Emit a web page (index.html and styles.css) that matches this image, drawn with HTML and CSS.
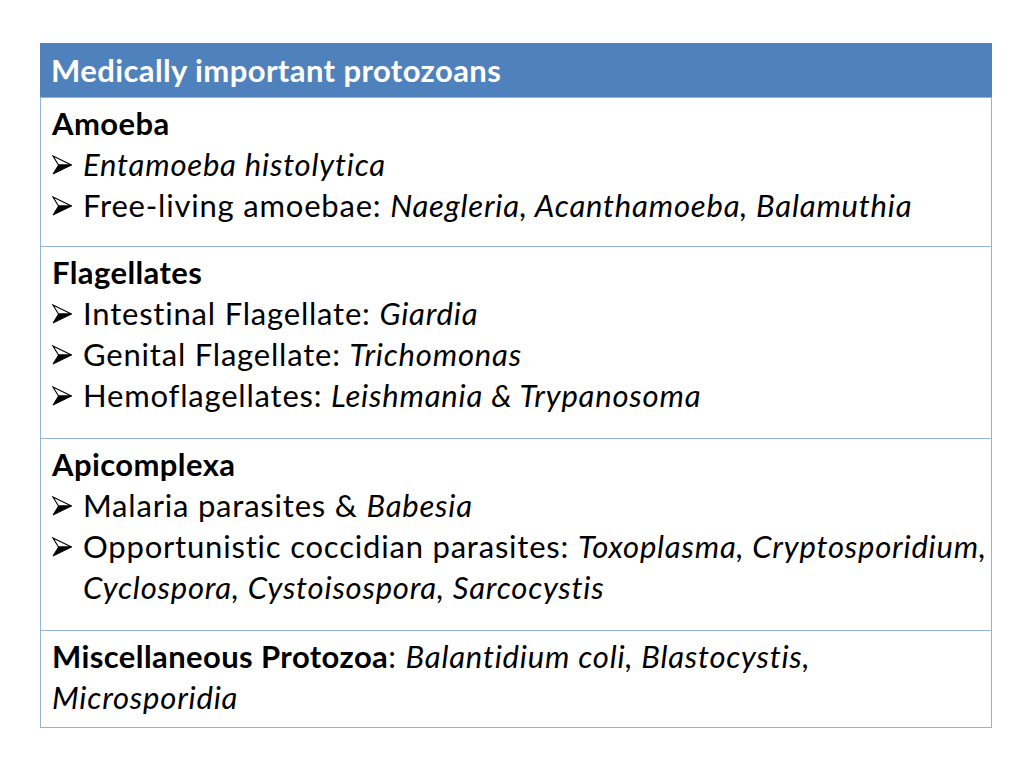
FILE: index.html
```html
<!DOCTYPE html>
<html>
<head>
<meta charset="utf-8">
<link rel="stylesheet" href="styles.css">
</head>
<body>
<svg width="0" height="0" class="defs">
  <defs>
    <symbol id="arrow" viewBox="0 0 20 20">
      <polygon points="1,1 19.5,10 6.5,10" fill="#fff" stroke="#000" stroke-width="1.1" stroke-linejoin="miter"/>
      <polygon points="6.5,10 19.5,10 1,19" fill="#000" stroke="#000" stroke-width="1"/>
    </symbol>
  </defs>
</svg>
<div class="table">
  <div class="head">Medically important protozoans</div>
  <div class="row r1">
    <div class="title">Amoeba</div>
    <div class="item"><svg class="bullet"><use href="#arrow"/></svg><span class="txt"><i>Entamoeba histolytica</i></span></div>
    <div class="item"><svg class="bullet"><use href="#arrow"/></svg><span class="txt">Free-living amoebae: <i>Naegleria, Acanthamoeba, Balamuthia</i></span></div>
  </div>
  <div class="row r2">
    <div class="title">Flagellates</div>
    <div class="item"><svg class="bullet"><use href="#arrow"/></svg><span class="txt">Intestinal Flagellate: <i>Giardia</i></span></div>
    <div class="item"><svg class="bullet"><use href="#arrow"/></svg><span class="txt">Genital Flagellate: <i>Trichomonas</i></span></div>
    <div class="item"><svg class="bullet"><use href="#arrow"/></svg><span class="txt">Hemoflagellates: <i>Leishmania &amp; Trypanosoma</i></span></div>
  </div>
  <div class="row r3">
    <div class="title">Apicomplexa</div>
    <div class="item"><svg class="bullet"><use href="#arrow"/></svg><span class="txt">Malaria parasites &amp; <i>Babesia</i></span></div>
    <div class="item"><svg class="bullet"><use href="#arrow"/></svg><span class="txt">Opportunistic coccidian parasites: <i>Toxoplasma, Cryptosporidium,</i><br><i>Cyclospora, Cystoisospora, Sarcocystis</i></span></div>
  </div>
  <div class="row r4">
    <div class="para"><b>Miscellaneous Protozoa</b>: <i>Balantidium coli, Blastocystis,</i><br><i>Microsporidia</i></div>
  </div>
</div>
</body>
</html>
```

FILE: styles.css
```css
html, body {
  margin: 0;
  padding: 0;
  background: #fff;
}
body {
  font-family: "Lato", "Open Sans", sans-serif;
  font-size: 31px;
  letter-spacing: 0.8px;
  line-height: 41px;
  color: #000;
}
.defs {
  position: absolute;
  width: 0;
  height: 0;
}
.table {
  margin: 43px 0 0 40px;
  width: 952px;
  box-sizing: border-box;
  border: 1px solid #95b3d7;
}
.head {
  background: #4f81bd;
  color: #fff;
  font-weight: bold;
  letter-spacing: 0.4px;
  height: 53px;
  line-height: 53px;
  padding-left: 11px;
  margin: -1px -1px 0 -1px;
  padding-top: 1px;
  box-sizing: content-box;
  white-space: nowrap;
}
.row {
  border-top: 1px solid #95b3d7;
  padding: 5px 6px 0 11px;
  white-space: nowrap;
}
.r1 { padding-bottom: 20px; }
.r2, .r3 { padding-bottom: 22px; }
.r4 { padding-bottom: 9px; }
.title {
  font-weight: bold;
  letter-spacing: 0.4px;
}
.para b {
  letter-spacing: 0.4px;
}
.item {
  display: flex;
  align-items: flex-start;
}
.bullet {
  flex: none;
  width: 20px;
  height: 20px;
  margin: 11px 11px 0 0;
}
.txt {
  flex: 1;
}
```
